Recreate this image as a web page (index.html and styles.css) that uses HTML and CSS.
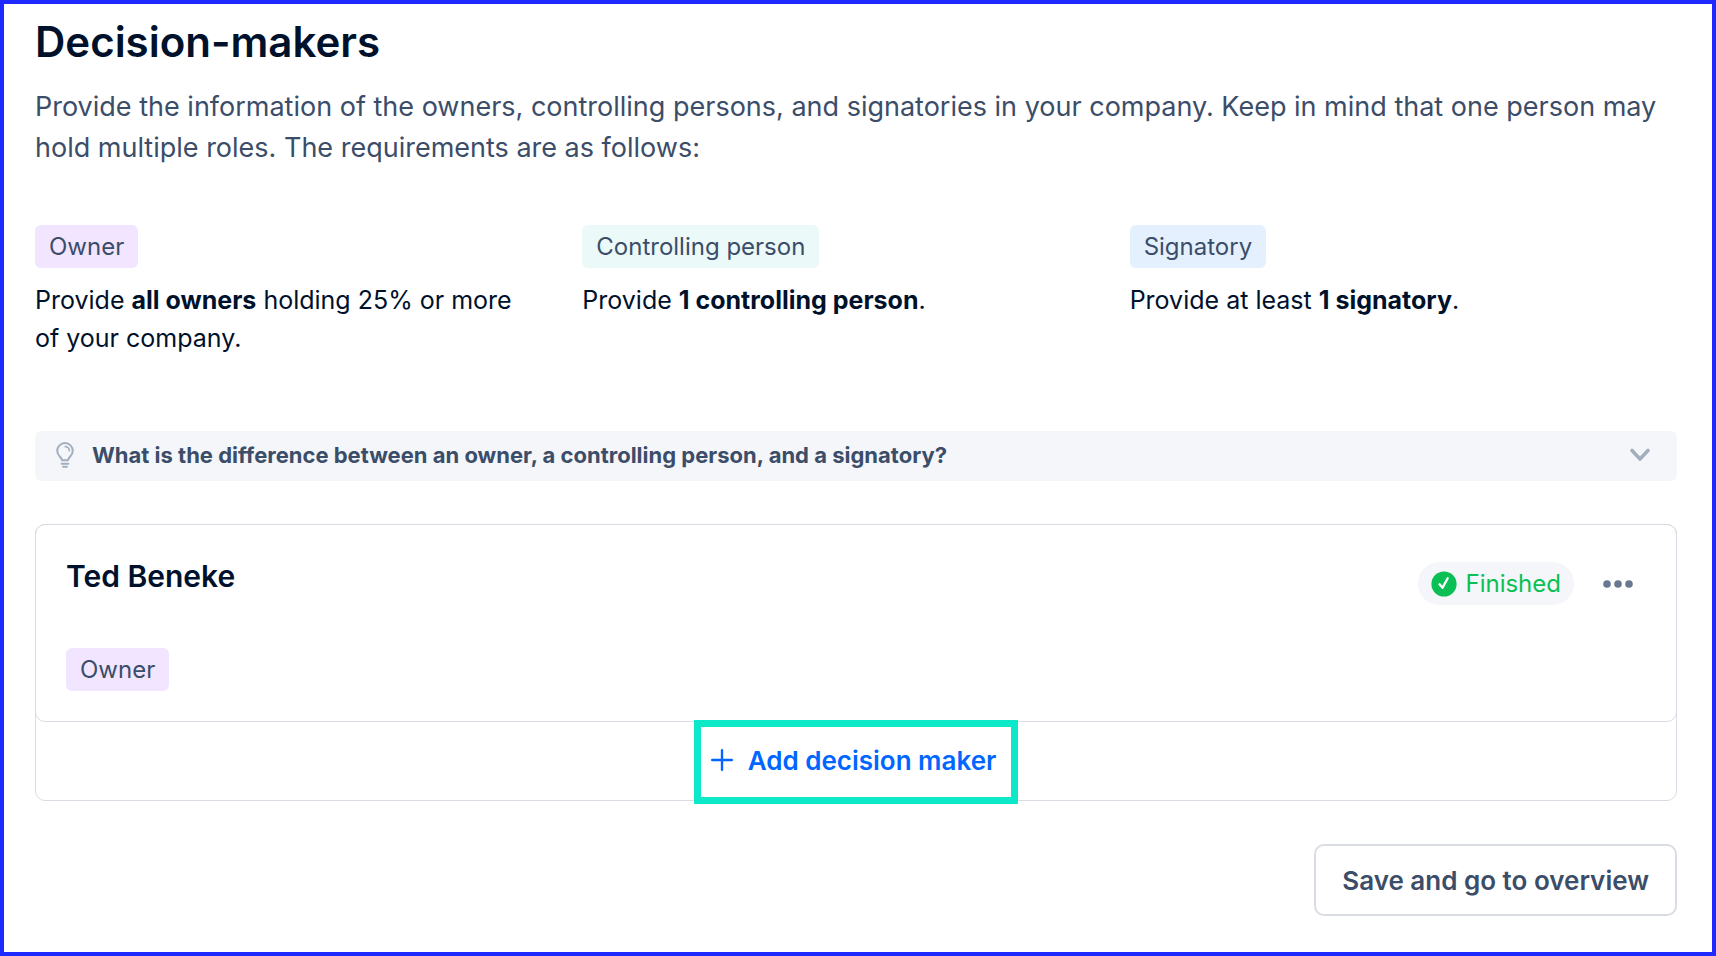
FILE: index.html
```html
<!DOCTYPE html>
<html lang="en">
<head>
<meta charset="utf-8">
<title>Decision-makers</title>
<link rel="stylesheet" href="styles.css">
</head>
<body>
<main class="page">
  <h1 class="title">Decision-makers</h1>
  <p class="intro">Provide the information of the owners, controlling persons, and signatories in your company. Keep in mind that one person may hold multiple roles. The requirements are as follows:</p>

  <section class="roles">
    <div class="role">
      <span class="tag tag-owner">Owner</span>
      <p class="role-text">Provide <strong>all owners</strong> holding 25% or more of your company.</p>
    </div>
    <div class="role">
      <span class="tag tag-controller">Controlling person</span>
      <p class="role-text">Provide <strong>1 controlling person</strong>.</p>
    </div>
    <div class="role">
      <span class="tag tag-signatory">Signatory</span>
      <p class="role-text">Provide at least <strong>1 signatory</strong>.</p>
    </div>
  </section>

  <button class="hint" type="button" aria-expanded="false">
    <svg class="hint-bulb" viewBox="0 0 18 26" width="18" height="26" fill="none" stroke="#a3afbf" stroke-linecap="round" stroke-linejoin="round" aria-hidden="true">
      <path d="M6.200 18.300C5.800 15.500 1.200 13.500 1.200 8.900a7.800 7.800 0 0 1 15.600 0C16.800 13.500 12.200 15.500 11.800 18.300Z" stroke-width="2"/>
      <path d="M9.300 4.600a4 4 0 0 1 4 4" stroke-width="1.700"/>
      <path d="M5.600 21.700h6.800M7 24.700h4" stroke-width="1.900"/>
    </svg>
    <span class="hint-text">What is the difference between an owner, a controlling person, and a signatory?</span>
    <svg class="hint-chevron" viewBox="0 0 22 14" width="22" height="14" fill="none" stroke="#a3afbf" stroke-width="3.600" stroke-linecap="round" stroke-linejoin="round" aria-hidden="true">
      <path d="M3 2.500l8 8.500 8-8.500"/>
    </svg>
  </button>

  <section class="people">
    <article class="person">
      <div class="person-head">
        <h2 class="person-name">Ted Beneke</h2>
        <div class="person-side">
          <span class="status">
            <svg viewBox="0 0 26 26" width="26" height="26" aria-hidden="true">
              <circle cx="13" cy="13" r="12.600" fill="#0abf53"/>
              <path d="M8.500 13.300l3 3.500 5.200-9.600" fill="none" stroke="#fff" stroke-width="2.300" stroke-linecap="round" stroke-linejoin="round"/>
            </svg>
            Finished
          </span>
          <button class="more" type="button" aria-label="More options">
            <svg viewBox="0 0 30 8" width="30" height="8" fill="#687890" aria-hidden="true">
              <circle cx="4" cy="4" r="3.800"/><circle cx="15" cy="4" r="3.800"/><circle cx="26" cy="4" r="3.800"/>
            </svg>
          </button>
        </div>
      </div>
      <span class="tag tag-owner">Owner</span>
    </article>
    <div class="add-row">
      <button class="add" type="button">
        <svg viewBox="0 0 22 22" width="22" height="22" fill="none" stroke="#0066ff" stroke-width="2.400" stroke-linecap="round" aria-hidden="true">
          <path d="M11 1.200v19.600M1.200 11h19.600"/>
        </svg>
        Add decision maker
      </button>
    </div>
  </section>

  <footer class="actions">
    <button class="save" type="button">Save and go to overview</button>
  </footer>
</main>
</body>
</html>
```

FILE: styles.css
```css
* {
  box-sizing: border-box;
}

body {
  margin: 0;
  font-family: Inter, "Liberation Sans", sans-serif;
  color: #00112c;
  background: #fff;
}

h1, h2, p {
  margin: 0;
}

button {
  font: inherit;
  color: inherit;
  background: none;
  border: 0;
  padding: 0;
  cursor: pointer;
}

svg {
  display: block;
  flex: none;
}

.page {
  min-height: 100vh;
  border: 4px solid #1d29ff;
  padding: 14px 35px 32px 31px;
}

.title {
  font-size: 42px;
  line-height: 48px;
  font-weight: 600;
}

.intro {
  margin-top: 20px;
  font-size: 27px;
  line-height: 41px;
  color: #3b4d68;
}

.roles {
  display: grid;
  grid-template-columns: repeat(3, 1fr);
  margin-top: 57px;
}

.role {
  padding-right: 48px;
}

.tag {
  display: inline-block;
  padding: 0 14px;
  border-radius: 6px;
  font-size: 24px;
  line-height: 43px;
  color: #3b4d68;
  vertical-align: top;
}

.tag-owner { background: #f1e5ff; }
.tag-controller { background: #ecf9f9; }
.tag-signatory { background: #e5f0ff; }

.role-text {
  margin-top: 13px;
  font-size: 25px;
  line-height: 38px;
}

.role-text strong {
  font-weight: 700;
}

.hint {
  display: flex;
  align-items: center;
  width: 100%;
  height: 50px;
  margin-top: 74px;
  padding: 0 26px 3px 21px;
  border-radius: 6px;
  background: #f4f6fa;
  color: #3b4d68;
  text-align: left;
}

.hint-text {
  flex: 1;
  margin-left: 18px;
  font-size: 22px;
  line-height: 32px;
  font-weight: 700;
}

.people {
  margin-top: 43px;
  border: 1px solid #d9dde3;
  border-radius: 10px;
}

.person {
  margin: -1px;
  padding: 30px 43px 30px 30px;
  border: 1px solid #d9dde3;
  border-radius: 10px;
}

.person-head {
  display: flex;
  justify-content: space-between;
  margin-bottom: 43px;
}

.person-name {
  font-size: 30px;
  line-height: 43px;
  font-weight: 600;
}

.person-side {
  display: flex;
  align-items: center;
  gap: 29px;
  height: 43px;
  margin-top: 7px;
}

.status {
  display: flex;
  align-items: center;
  gap: 8px;
  padding: 0 13px;
  border-radius: 22px;
  background: #f4f6fa;
  color: #0abf53;
  font-size: 24px;
  line-height: 43px;
}

.add-row {
  display: flex;
  justify-content: center;
  height: 79px;
}

.add {
  display: flex;
  align-items: center;
  gap: 15px;
  height: 84px;
  margin-top: -1px;
  padding: 0 15px 4px 10px;
  border: 7px solid #0de8c8;
  background: #fff;
  color: #0066ff;
  font-size: 26px;
  font-weight: 600;
  white-space: nowrap;
  position: relative;
}

.actions {
  display: flex;
  justify-content: flex-end;
  margin-top: 43px;
}

.save {
  height: 72px;
  padding: 0 26px;
  border: 2px solid #d9dde3;
  border-radius: 10px;
  color: #3b4d68;
  font-size: 26px;
  font-weight: 600;
}
```
